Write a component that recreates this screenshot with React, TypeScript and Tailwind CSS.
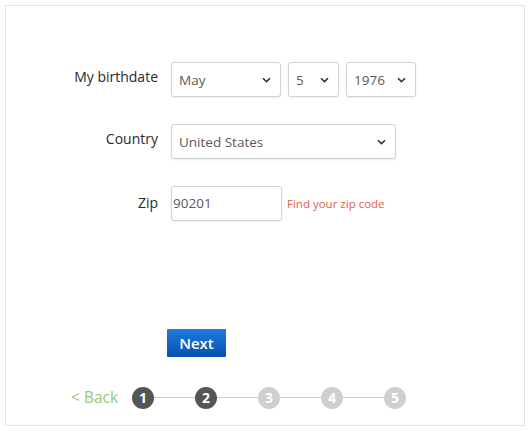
import React from "react";

const Chevron = () => (
  <svg width="9" height="6" viewBox="0 0 9 6" className="pointer-events-none absolute right-[9px] top-1/2 -translate-y-1/2">
    <path d="M1 1.2 L4.5 4.6 L8 1.2" fill="none" stroke="#333" strokeWidth="1.6" />
  </svg>
);

const Select = ({ value, w }: { value: string; w: string }) => (
  <div className={`relative h-[35px] ${w} rounded-[3px] border border-[#d2d2d2] bg-white shadow-[0_1px_2px_rgba(0,0,0,0.08)]`}>
    <span className="absolute left-[7px] top-1/2 -translate-y-1/2 text-[13.5px] text-[#5a5a5a]">{value}</span>
    <Chevron />
  </div>
);

const Step = ({ n, active }: { n: number; active: boolean }) => (
  <div
    className={`flex h-[22px] w-[22px] items-center justify-center rounded-full text-[14px] font-bold text-white ${
      active ? "bg-[#555555]" : "bg-[#cfcfcf]"
    }`}
  >
    {n}
  </div>
);

const Line = () => <div className="h-px w-[41px] bg-[#cccccc]" />;

export default function App() {
  return (
    <div className="h-[431px] w-[532px] bg-white p-[5px]" style={{ fontFamily: '"Open Sans", "Noto Sans", sans-serif' }}>
      <div className="flex h-[421px] w-[520px] flex-col border border-[#e3e3e3] pt-[56px]">
        <div className="flex flex-col gap-[27px]">
          <div className="flex items-start">
            <div className="w-[152px] pt-[4px] text-right text-[14px] text-[#2a2a2a]">My birthdate</div>
            <div className="ml-[13px] flex gap-[7px]">
              <Select value="May" w="w-[110px]" />
              <Select value="5" w="w-[51px]" />
              <Select value="1976" w="w-[70px]" />
            </div>
          </div>
          <div className="flex items-start">
            <div className="w-[152px] pt-[4px] text-right text-[14px] text-[#2a2a2a]">Country</div>
            <div className="ml-[13px] flex">
              <Select value="United States" w="w-[225px]" />
            </div>
          </div>
          <div className="flex items-start">
            <div className="w-[152px] pt-[6px] text-right text-[14px] text-[#2a2a2a]">Zip</div>
            <div className="ml-[13px] flex items-center gap-[5px]">
              <div className="flex h-[35px] w-[111px] items-center rounded-[3px] border border-[#d2d2d2] bg-white pl-[1px] text-[13.5px] text-[#5a5a5a] shadow-[0_1px_2px_rgba(0,0,0,0.08)]">
                90201
              </div>
              <span className="text-[11.5px] text-[#e0604f]">Find your zip code</span>
            </div>
          </div>
        </div>
        <div className="ml-[161px] mt-[108px]">
          <button className="flex h-[28px] w-[59px] items-center justify-center rounded-[1px] bg-gradient-to-b from-[#1e7be0] to-[#0850ad] text-[15px] font-semibold text-white">
            Next
          </button>
        </div>
        <div className="ml-[65px] mt-[29px] flex items-center">
          <span className="mr-[14px] text-[15.5px] text-[#99c77c]">&lt; Back</span>
          <Step n={1} active />
          <Line />
          <Step n={2} active />
          <Line />
          <Step n={3} active={false} />
          <Line />
          <Step n={4} active={false} />
          <Line />
          <Step n={5} active={false} />
        </div>
      </div>
    </div>
  );
}
